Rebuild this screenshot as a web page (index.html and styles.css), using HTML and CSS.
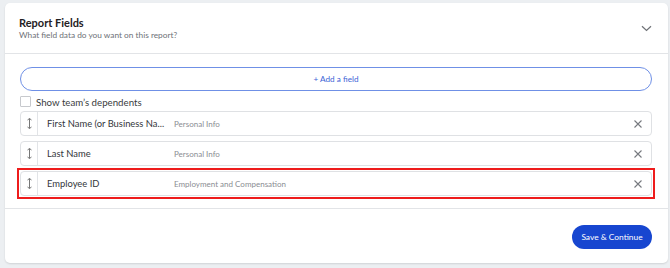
FILE: index.html
```html
<!DOCTYPE html>
<html lang="en">
<head>
    <meta charset="UTF-8">
    <title>Report Fields</title>
    <link rel="stylesheet" href="styles.css">
</head>
<body>
    <div class="card">
        <div class="card-header">
            <div>
                <h2 class="title">Report Fields</h2>
                <p class="subtitle">What field data do you want on this report?</p>
            </div>
            <svg class="chevron" width="11" height="7" viewBox="0 0 11 7">
                <path d="M1 1.2 L5.5 5.5 L10 1.2" fill="none" stroke="#6f7277" stroke-width="1.2"/>
            </svg>
        </div>

        <div class="card-body">
            <button class="add-btn">+ Add a field</button>

            <label class="check-row">
                <span class="checkbox"></span>
                Show team’s dependents
            </label>

            <div class="field-list">
                <div class="field-row">
                    <span class="handle">
                        <svg width="5" height="11" viewBox="0 0 5 11"><path d="M2.5 0.5 V10.5 M0.5 2 L2.5 0.5 L4.5 2 M0.5 9 L2.5 10.5 L4.5 9" fill="none" stroke="#777" stroke-width="1"/></svg>
                    </span>
                    <span class="field-name">First Name (or Business Na...</span>
                    <span class="field-group">Personal Info</span>
                    <svg class="remove" width="8" height="8" viewBox="0 0 8 8"><path d="M0.5 0.5 L7.5 7.5 M7.5 0.5 L0.5 7.5" stroke="#76797e" stroke-width="1.1"/></svg>
                </div>
                <div class="field-row">
                    <span class="handle">
                        <svg width="5" height="11" viewBox="0 0 5 11"><path d="M2.5 0.5 V10.5 M0.5 2 L2.5 0.5 L4.5 2 M0.5 9 L2.5 10.5 L4.5 9" fill="none" stroke="#777" stroke-width="1"/></svg>
                    </span>
                    <span class="field-name">Last Name</span>
                    <span class="field-group">Personal Info</span>
                    <svg class="remove" width="8" height="8" viewBox="0 0 8 8"><path d="M0.5 0.5 L7.5 7.5 M7.5 0.5 L0.5 7.5" stroke="#76797e" stroke-width="1.1"/></svg>
                </div>
                <div class="highlight">
                    <div class="field-row">
                        <span class="handle">
                            <svg width="5" height="11" viewBox="0 0 5 11"><path d="M2.5 0.5 V10.5 M0.5 2 L2.5 0.5 L4.5 2 M0.5 9 L2.5 10.5 L4.5 9" fill="none" stroke="#777" stroke-width="1"/></svg>
                        </span>
                        <span class="field-name">Employee ID</span>
                        <span class="field-group">Employment and Compensation</span>
                        <svg class="remove" width="8" height="8" viewBox="0 0 8 8"><path d="M0.5 0.5 L7.5 7.5 M7.5 0.5 L0.5 7.5" stroke="#76797e" stroke-width="1.1"/></svg>
                    </div>
                </div>
            </div>
        </div>

        <div class="card-footer">
            <button class="save-btn">Save &amp; Continue</button>
        </div>
    </div>
</body>
</html>
```

FILE: styles.css
```css
body {
    margin: 0;
    padding: 3px 2px 5px 5px;
    background-color: #eceff2;
    font-family: Lato, Arial, sans-serif;
    color: #2a2c30;
}

.card {
    width: 663px;
    height: 260px;
    background-color: white;
    border-radius: 5px;
    box-shadow: 0 1px 2px rgba(0, 0, 0, 0.12);
    display: flex;
    flex-direction: column;
}

.card-header {
    display: flex;
    justify-content: space-between;
    align-items: center;
    padding: 1px 16px 0 14px;
    height: 49px;
    border-bottom: 1px solid #e2e4e7;
}

.title {
    margin: 0;
    font-size: 11px;
    font-weight: 700;
    line-height: 14px;
    color: #1f2124;
}

.subtitle {
    margin: 0;
    font-size: 8.3px;
    line-height: 11px;
    color: #6e7177;
}

.card-body {
    padding: 13px 16px 12px 15px;
    border-bottom: 1px solid #e2e4e7;
}

.add-btn {
    display: block;
    width: 100%;
    height: 24px;
    border: 1px solid #6f90e6;
    border-radius: 12px;
    background: white;
    color: #3c63d6;
    font-family: inherit;
    font-size: 8.2px;
    padding: 0;
}

.check-row {
    display: flex;
    align-items: center;
    gap: 5px;
    margin-top: 5px;
    height: 11px;
    font-size: 9.7px;
    color: #3a3c40;
}

.checkbox {
    width: 9px;
    height: 9px;
    border: 1px solid #c7c9cd;
    border-radius: 1px;
}

.field-list {
    display: flex;
    flex-direction: column;
    gap: 5px;
    margin-top: 4px;
}

.field-row {
    display: flex;
    align-items: center;
    height: 23px;
    border: 1px solid #dfe1e4;
    border-radius: 4px;
    font-size: 9.4px;
}

.highlight {
    margin: -3px;
    border: 2px solid #ee1c1c;
    padding: 1px;
}

.handle {
    width: 16px;
    height: 100%;
    display: flex;
    align-items: center;
    justify-content: center;
    border-right: 1px solid #e2e4e7;
}

.field-name {
    flex-shrink: 0;
    width: 127px;
    padding-left: 9px;
    color: #33363a;
    white-space: nowrap;
    overflow: hidden;
}

.field-group {
    flex: 1;
    font-size: 8px;
    color: #8a8d92;
}

.remove {
    margin-right: 9px;
}

.card-footer {
    flex: 1;
    display: flex;
    justify-content: flex-end;
    align-items: center;
    padding: 0 16px;
}

.save-btn {
    height: 24px;
    width: 80px;
    border: none;
    border-radius: 12px;
    background-color: #1746d0;
    color: white;
    font-family: inherit;
    font-size: 8.4px;
    padding: 0;
    margin-top: 2px;
}
```
